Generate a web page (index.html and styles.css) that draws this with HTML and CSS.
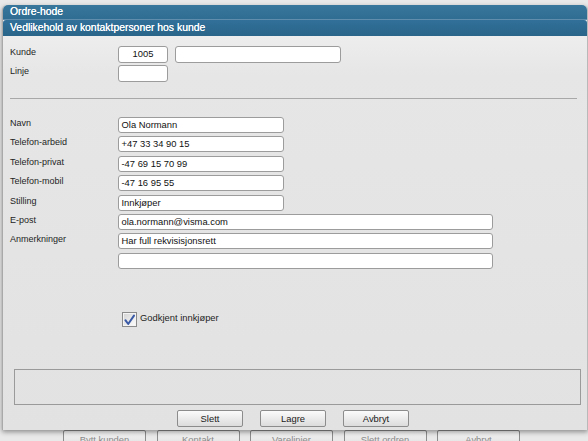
FILE: index.html
```html
<!DOCTYPE html>
<html>
<head>
<meta charset="utf-8">
<link rel="stylesheet" href="styles.css">
</head>
<body>
<div class="dialog">
  <div class="head-outer">Ordre-hode</div>
  <div class="head-inner">Vedlikehold av kontaktpersoner hos kunde</div>
  <div class="content">
    <div class="grid top-grid">
      <div class="label">Kunde</div>
      <div class="pair"><div class="field w-xs center">1005</div><div class="field w-m"></div></div>
      <div class="label">Linje</div>
      <div><div class="field w-xs"></div></div>
    </div>
    <div class="sep"></div>
    <div class="grid contact-grid">
      <div class="label">Navn</div><div class="field w-m">Ola Normann</div>
      <div class="label">Telefon-arbeid</div><div class="field w-m">+47 33 34 90 15</div>
      <div class="label">Telefon-privat</div><div class="field w-m">-47 69 15 70 99</div>
      <div class="label">Telefon-mobil</div><div class="field w-m">-47 16 95 55</div>
      <div class="label">Stilling</div><div class="field w-m">Innkjøper</div>
      <div class="label">E-post</div><div class="field w-l">ola.normann@visma.com</div>
      <div class="label">Anmerkninger</div><div class="field w-l">Har full rekvisisjonsrett</div>
      <div class="label"></div><div class="field w-l"></div>
    </div>
    <div class="check-row">
      <svg class="checkbox" width="15" height="15" viewBox="0 0 15 15">
        <defs>
          <linearGradient id="cbg" x1="0" y1="0" x2="1" y2="1">
            <stop offset="0" stop-color="#d6d6d6"/>
            <stop offset="1" stop-color="#fbfbfb"/>
          </linearGradient>
        </defs>
        <rect x="0.5" y="0.5" width="14" height="14" fill="#f4f4f4" stroke="#8b8b8b"/>
        <rect x="2" y="2" width="11" height="11" fill="url(#cbg)"/>
        <path d="M3.4 8.2 L6.2 12 L12 3.6" fill="none" stroke="#3b5aa6" stroke-width="2" stroke-linejoin="round" stroke-linecap="round"/>
      </svg>
      <span class="check-label">Godkjent innkjøper</span>
    </div>
    <div class="msg"></div>
    <div class="buttons">
      <button class="btn">Slett</button>
      <button class="btn">Lagre</button>
      <button class="btn">Avbryt</button>
    </div>
  </div>
</div>
<div class="under">
  <button class="ubtn">Bytt kunden</button>
  <button class="ubtn">Kontakt</button>
  <button class="ubtn">Varelinjer</button>
  <button class="ubtn">Slett ordren</button>
  <button class="ubtn">Avbryt</button>
</div>
</body>
</html>
```

FILE: styles.css
```css
* { box-sizing: border-box; }
html, body { margin: 0; padding: 0; }
body {
  width: 588px;
  height: 441px;
  overflow: hidden;
  background: #e9e9e9;
  font-family: "Liberation Sans", Arial, sans-serif;
  color: #1e1e1e;
  padding-top: 5px;
}
.dialog {
  position: relative;
  z-index: 2;
  margin-left: 2px;
  width: 586px;
  border-left: 1px solid #a9a9a9;
  border-right: 1px solid #b9b9b9;
  border-radius: 5px 5px 0 0;
  background: linear-gradient(#f3f3f3 0, #e6e6e6 70px, #e2e2e2 100%);
  box-shadow: 0 2px 5px rgba(0, 0, 0, 0.4);
}
.head-outer {
  height: 15px;
  border-radius: 5px 5px 0 0;
  background: linear-gradient(#3a779c, #2f6d92);
  border-bottom: 1px solid #5f8dab;
  color: #fff;
  font-size: 10.4px;
  line-height: 14px;
  padding-left: 7px;
  text-shadow: 0 0 0.4px #fff;
}
.head-inner {
  height: 16px;
  border-radius: 3px 3px 0 0;
  background: linear-gradient(#32709a, #2a6589);
  color: #fff;
  font-size: 10.4px;
  line-height: 15px;
  padding-left: 7px;
  text-shadow: 0 0 0.4px #fff;
}
.content {
  padding: 10px 6px 3px 7px;
}
.grid {
  display: grid;
  grid-template-columns: 108px auto;
}
.top-grid {
  grid-auto-rows: 17px;
  row-gap: 2px;
}
.contact-grid {
  margin-top: 18px;
  grid-auto-rows: 16px;
  row-gap: 3.4px;
}
.label {
  font-size: 9px;
  line-height: 9px;
  padding-top: 2px;
  color: #1e1e1e;
}
.pair {
  display: flex;
  gap: 7px;
}
.field {
  height: 100%;
  background: #fff;
  border: 1px solid #9c9c9c;
  border-radius: 3px;
  font-size: 9.4px;
  line-height: 14px;
  padding-left: 2.5px;
  color: #111;
  white-space: nowrap;
  overflow: hidden;
}
.center { text-align: center; padding-left: 0; }
.w-xs { width: 50px; }
.w-m { width: 166px; }
.w-l { width: 375px; }
.sep {
  margin: 16px 4px 0 0;
  border-top: 1px solid #a8a8a8;
}
.check-row {
  display: flex;
  align-items: flex-start;
  margin-top: 43.2px;
  padding-left: 112px;
  height: 15px;
}
.checkbox { display: block; }
.check-label {
  font-size: 9.4px;
  line-height: 9px;
  margin-left: 3px;
  padding-top: 1px;
}
.msg {
  margin: 42px 0 0 4px;
  height: 36px;
  border: 1px solid #9a9a9a;
}
.buttons {
  display: flex;
  justify-content: center;
  gap: 17px;
  margin-top: 5px;
  padding-right: 5px;
}
.btn {
  width: 66px;
  height: 17px;
  padding: 0;
  margin: 0;
  border: 1px solid #8c8c8c;
  border-radius: 2px;
  background: linear-gradient(#fbfbfb, #dcdcdc);
  font-family: "Liberation Sans", Arial, sans-serif;
  font-size: 9.4px;
  line-height: 15px;
  color: #1a1a1a;
}
.under {
  display: flex;
  gap: 10.5px;
  padding-left: 63px;
}
.ubtn {
  width: 83px;
  height: 20px;
  padding: 0;
  margin: 0;
  border: 1px solid #8c8c8c;
  border-radius: 2px;
  background: linear-gradient(#f6f6f6, #dadada);
  font-family: "Liberation Sans", Arial, sans-serif;
  font-size: 9.4px;
  line-height: 13px;
  color: #8a8a8a;
}
```
